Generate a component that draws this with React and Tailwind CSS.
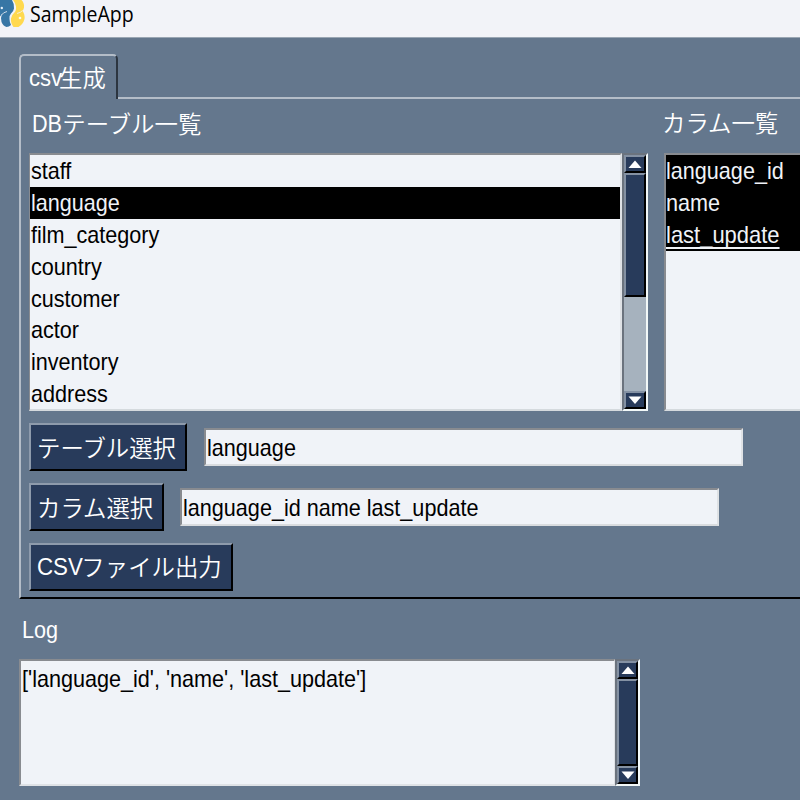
import React from "react";

const TABLES = ["staff", "language", "film_category", "country", "customer", "actor", "inventory", "address"];
const COLUMNS = ["language_id", "name", "last_update"];

const T = ({ children, className = "" }) => (
  <span className={`inline-block origin-left whitespace-pre ${className}`}>{children}</span>
);

const Jp = ({ children }) => (
  <span className="inline-block font-['Noto_Sans_CJK_JP',sans-serif] text-[23.4px] font-[350]">{children}</span>
);

function Arrow({ down }) {
  return (
    <div className="flex h-[18px] shrink-0 items-center justify-center border-2 border-b-black border-l-[#8491a3] border-r-black border-t-[#8491a3] bg-[#283b5b]">
      <svg width="14" height="8" viewBox="0 0 14 8" className="shrink-0">
        <path d={down ? "M0.5 0.5H13.5L7 8Z" : "M0.5 8H13.5L7 0.5Z"} fill="#fff" />
      </svg>
    </div>
  );
}

function Scrollbar({ thumb, className = "" }) {
  return (
    <div className={`flex shrink-0 flex-col border-2 border-b-[#f2f8f8] border-l-[#6b737e] border-r-[#f2f8f8] border-t-[#6b737e] bg-[#a6b2be] ${className}`}>
      <Arrow />
      <div className={`border-2 border-b-black border-l-[#8491a3] border-r-black border-t-[#8491a3] bg-[#283b5b] ${thumb}`} />
      <div className="flex-1" />
      <Arrow down />
    </div>
  );
}

const Button = ({ children, className }) => (
  <button className={`flex h-12 shrink-0 items-center border-2 border-b-black border-l-[#8e9bac] border-r-black border-t-[#8e9bac] bg-[#283b5b] pl-1.5 text-left text-white ${className}`}>
    {children}
  </button>
);

const Field = ({ children }) => (
  <div className="flex h-[38px] w-[539px] items-center border-2 border-b-[#d9dcdf] border-l-[#888b90] border-r-[#dfe2e5] border-t-[#888b90] bg-[#f0f3f8] pl-px pt-0.5 text-black">
    <T className="scale-x-[0.9]">{children}</T>
  </div>
);

function Logo() {
  return (
    <svg width="25" height="28" viewBox="0 0 25 28" className="shrink-0">
      <path d="M0 0H12Q14.500 4 14 8.500Q13.500 11.500 11 13.500Q9 15.500 9.500 19Q9.500 22 11 25Q9 27 6.500 27Q3 26 1.500 22Q0.500 17 2 14L0 16.500Z" fill="#3776a5" />
      <path d="M13 0H21.500Q24.500 3 24 7.500Q23.500 9.500 22.500 11Q25 14 24.500 19Q23 24.500 18.500 27H13.500Q10.500 23 11 18.500Q11.500 15 14 13Q16.500 10.500 16 6.500Q15.500 3 13 0Z" fill="#ffd94f" />
      <path d="M1.500 15Q3 12.500 7 11.500M17 13.500Q21 12.500 22.500 10.500" stroke="#f2f3f8" strokeWidth="0.8" fill="none" />
      <circle cx="1.800" cy="8" r="1.200" fill="#e8f0f8" />
      <circle cx="20" cy="18" r="1.300" fill="#fffbe8" />
    </svg>
  );
}

export default function App() {
  return (
    <div className="flex h-[800px] w-[800px] flex-col overflow-hidden bg-[#64778d] font-['Liberation_Sans',Arial,sans-serif] text-2xl leading-8 text-white">
      <header className="flex h-[38px] shrink-0 items-start border-b border-[#9aa6b3] bg-[#f2f3f8] text-black">
        <Logo />
        <T className="ml-1 scale-x-[0.93] pl-px font-['Open_Sans','Noto_Sans',sans-serif] text-[21px] leading-7">SampleApp</T>
      </header>

      <main className="flex flex-col pl-[19px] pt-4">
        <div className="flex h-[45px]">
          <div className="flex w-[99px] items-center rounded-t-[5px] border-l-2 border-r-2 border-t-2 border-l-[#b4bdc8] border-r-[#2c3540] border-t-[#b4bdc8] pl-2">
            <T className="scale-x-[0.92]">csv</T>
            <span className="-ml-[6px]"><Jp>生成</Jp></span>
          </div>
          <div className="flex-1 border-b-2 border-[#b4bdc8]" />
        </div>

        <section className="flex h-[500px] flex-col border-b-2 border-l-2 border-b-black border-l-[#b4bdc8] pl-2">
          <div className="flex h-[54px] items-center pb-1">
            <div className="flex w-[633px] items-center pl-[3px]">
              <T className="scale-x-[0.9]">DB</T>
              <span className="-ml-[3px]"><Jp>テーブル一覧</Jp></span>
            </div>
            <span className="-mt-0.5"><Jp>カラム一覧</Jp></span>
          </div>

          <div className="flex h-[258px] shrink-0">
            <div className="flex w-[619px] shrink-0">
              <ul className="flex-1 border-2 border-l border-b-[#d5dade] border-l-[#888b90] border-r-[#dfe2e6] border-t-[#888b90] bg-[#f0f3f8] text-black">
                {TABLES.map((name) => (
                  <li key={name} className={`h-[31.9px] ${name === "language" ? "bg-black text-[#f0f3f8]" : ""}`}>
                    <T className="scale-x-[0.9] pl-px">{name}</T>
                  </li>
                ))}
              </ul>
              <Scrollbar className="w-[26px]" thumb="h-[124px]" />
            </div>
            <ul className="ml-4 flex-1 border-2 border-r-0 border-b-[#d5dade] border-l-[#888b90] border-t-[#888b90] bg-[#f0f3f8]">
              {COLUMNS.map((name) => (
                <li key={name} className="h-8 bg-black text-[#f0f3f8]">
                  <T className={name === "last_update" ? "scale-x-[0.915] underline decoration-2 underline-offset-4 [text-decoration-skip-ink:none]" : "scale-x-[0.9]"}>{name}</T>
                </li>
              ))}
            </ul>
          </div>

          <div className="mt-3 flex flex-col gap-3">
            <div className="flex items-center gap-[17px]">
              <Button className="w-[158px]"><Jp>テーブル選択</Jp></Button>
              <Field>language</Field>
            </div>
            <div className="flex items-center gap-4">
              <Button className="w-[135px]"><Jp>カラム選択</Jp></Button>
              <Field>language_id name last_update</Field>
            </div>
            <Button className="w-[204px]">
              <T className="scale-x-[0.93]">CSV</T>
              <span className="-ml-[5px]"><Jp>ファイル出力</Jp></span>
            </Button>
          </div>
        </section>

        <div className="mt-[15px] h-[45px] pl-[3px]">
          <T className="scale-x-[0.9]">Log</T>
        </div>
        <div className="flex h-[127px] w-[621px]">
          <div className="flex-1 border-2 border-r border-b-[#dfe2e6] border-l-[#888b90] border-r-[#dfe2e6] border-t-[#888b90] bg-[#f0f3f8] pl-px pt-0.5 text-black">
            <T className="scale-x-[0.9]">{"['language_id', 'name', 'last_update']"}</T>
          </div>
          <Scrollbar className="w-[25px]" thumb="h-[87px]" />
        </div>
      </main>
    </div>
  );
}
